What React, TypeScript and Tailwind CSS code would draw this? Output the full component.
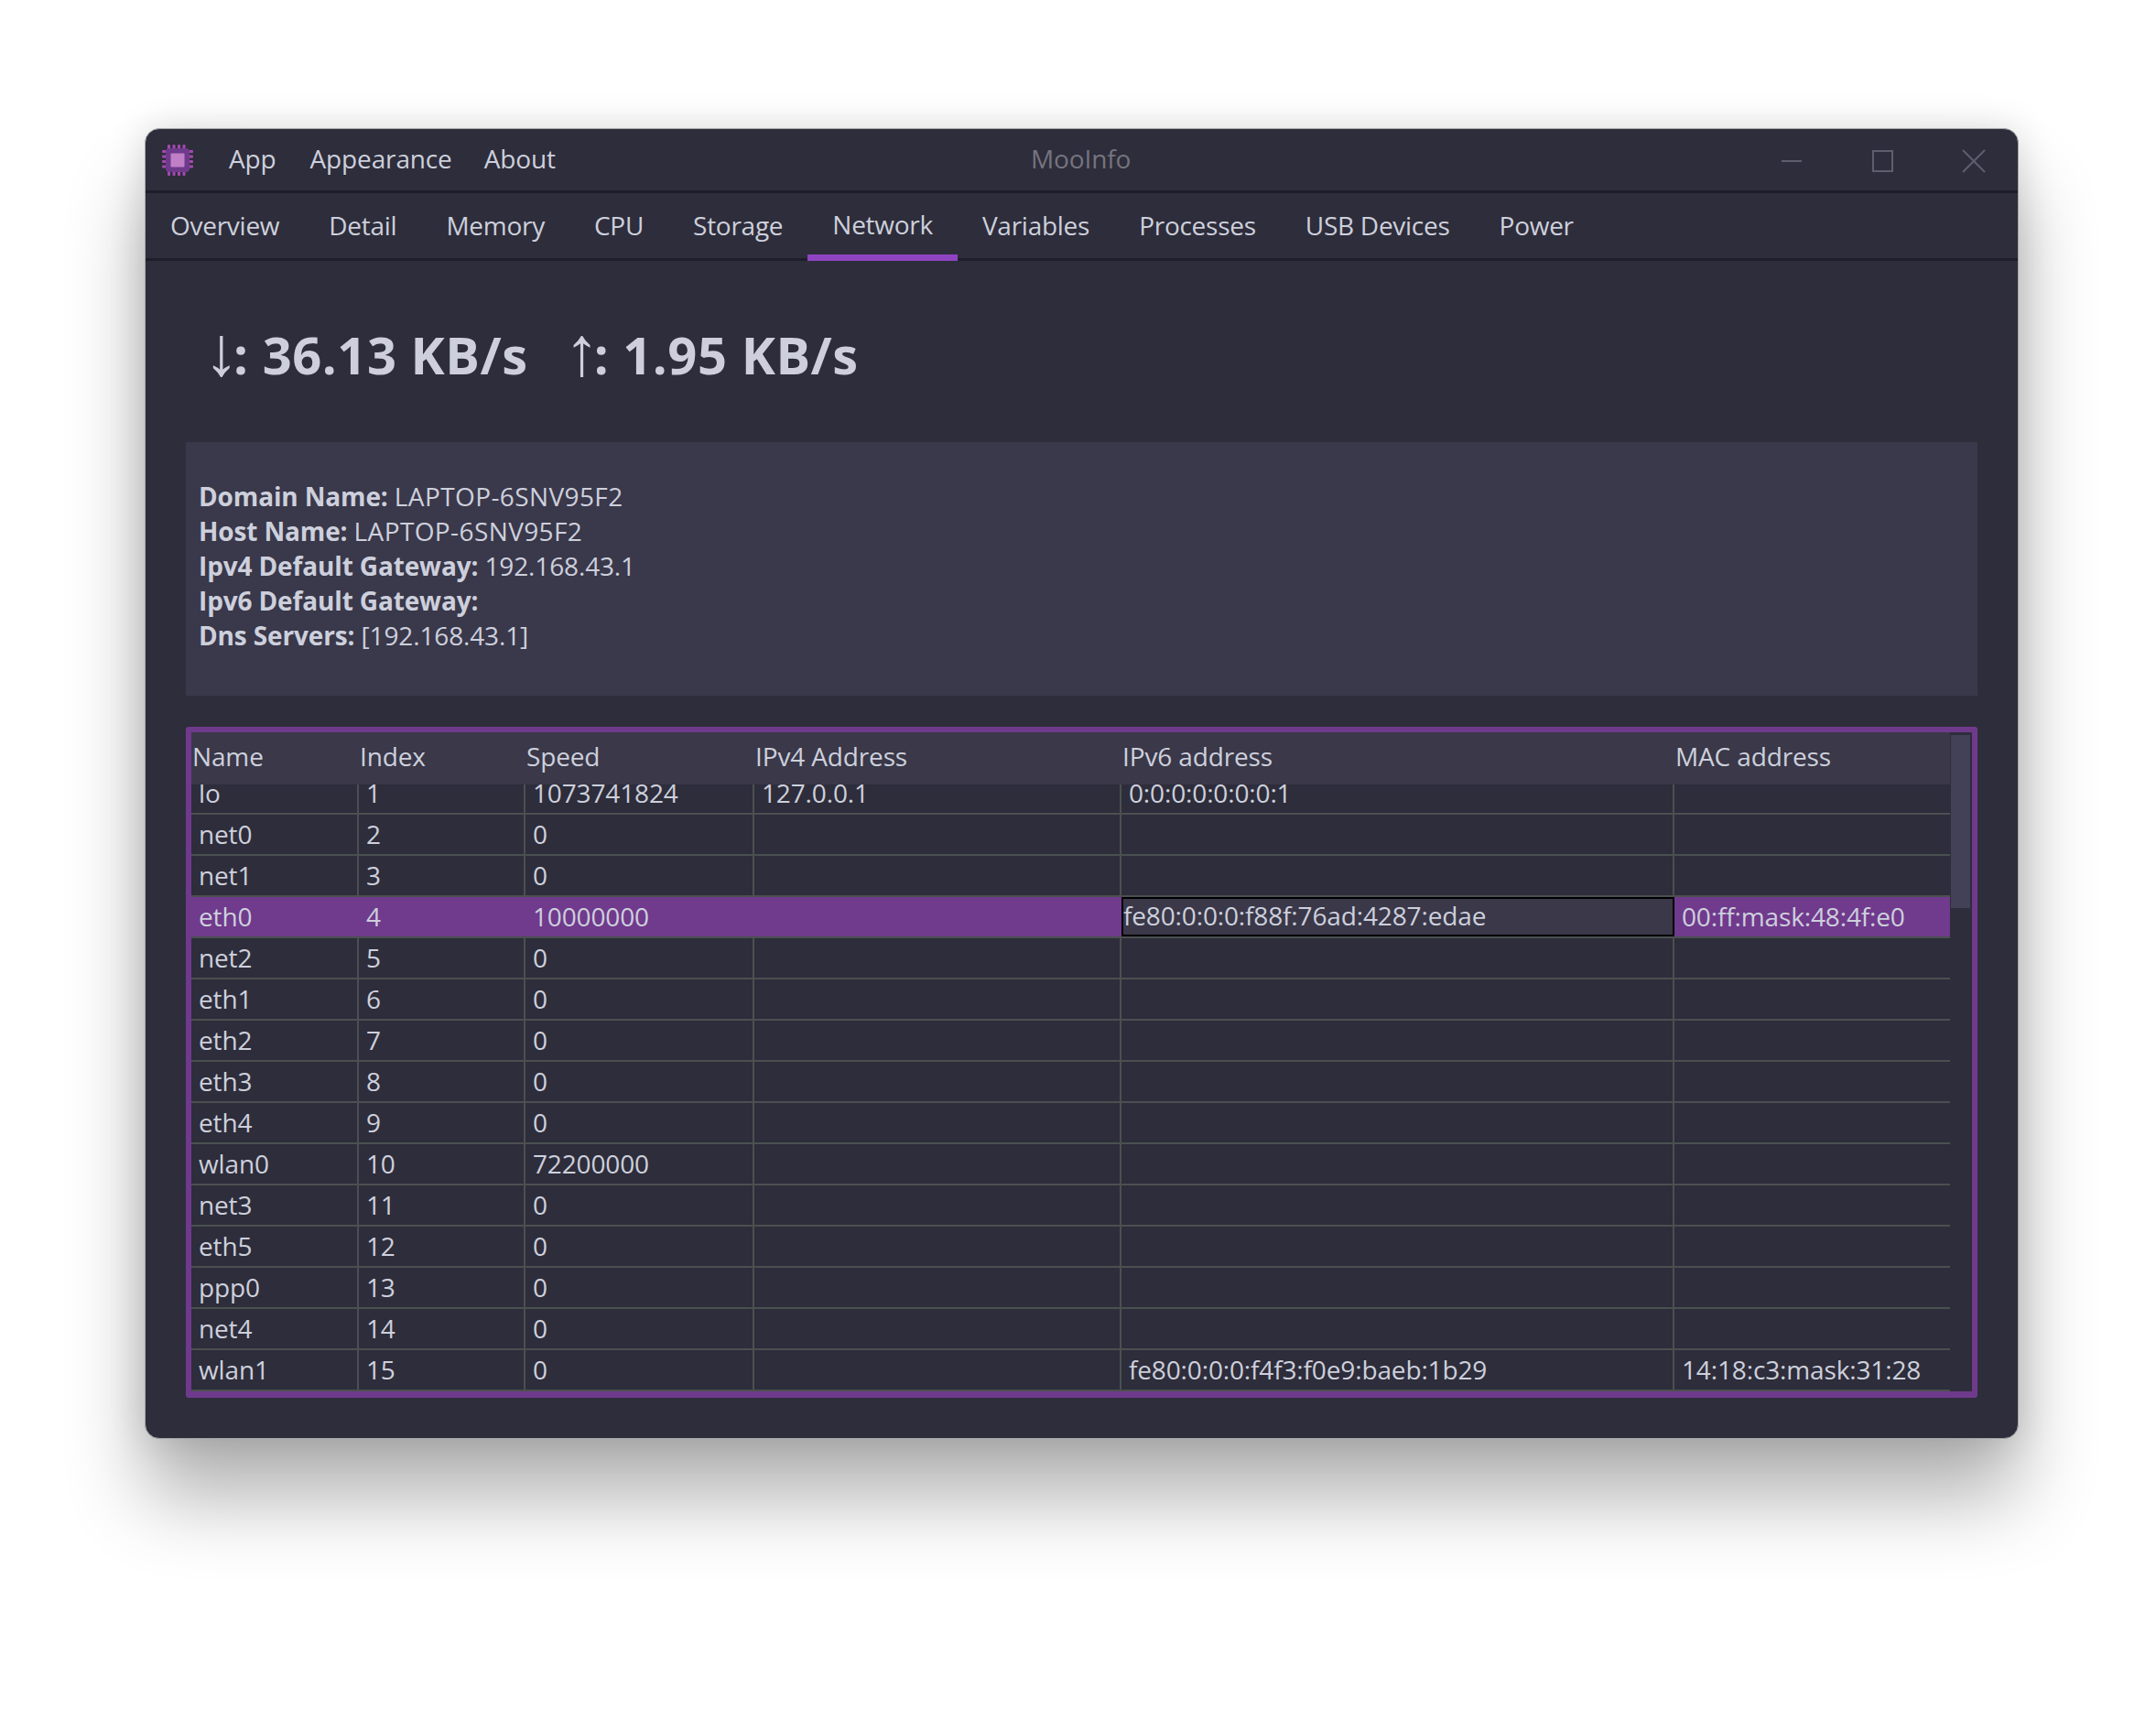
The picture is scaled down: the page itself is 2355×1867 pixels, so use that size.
const font = { fontFamily: '"Open Sans", "Noto Sans", sans-serif' };

const tabs = ['Overview', 'Detail', 'Memory', 'CPU', 'Storage', 'Network', 'Variables', 'Processes', 'USB Devices', 'Power'];
const cols = ['Name', 'Index', 'Speed', 'IPv4 Address', 'IPv6 address', 'MAC address'];
const rows: string[][] = [
  ['lo', '1', '1073741824', '127.0.0.1', '0:0:0:0:0:0:0:1', ''],
  ['net0', '2', '0', '', '', ''],
  ['net1', '3', '0', '', '', ''],
  ['eth0', '4', '10000000', '', 'fe80:0:0:0:f88f:76ad:4287:edae', '00:ff:mask:48:4f:e0'],
  ['net2', '5', '0', '', '', ''],
  ['eth1', '6', '0', '', '', ''],
  ['eth2', '7', '0', '', '', ''],
  ['eth3', '8', '0', '', '', ''],
  ['eth4', '9', '0', '', '', ''],
  ['wlan0', '10', '72200000', '', '', ''],
  ['net3', '11', '0', '', '', ''],
  ['eth5', '12', '0', '', '', ''],
  ['ppp0', '13', '0', '', '', ''],
  ['net4', '14', '0', '', '', ''],
  ['wlan1', '15', '0', '', 'fe80:0:0:0:f4f3:f0e9:baeb:1b29', '14:18:c3:mask:31:28'],
];
const info: [string, string, boolean][] = [
  ['Domain Name:', 'LAPTOP-6SNV95F2', true],
  ['Host Name:', 'LAPTOP-6SNV95F2', true],
  ['Ipv4 Default Gateway:', '192.168.43.1', false],
  ['Ipv6 Default Gateway:', '', false],
  ['Dns Servers:', '[192.168.43.1]', false],
];

function Chip() {
  const offs = [6, 11.5, 17, 22.5];
  return (
    <svg width="36" height="36" viewBox="0 0 36 36">
      {offs.map((o) => (
        <g key={o} fill="#a349b0">
          <rect x={o + 1} y="1" width="3" height="6" rx="1" />
          <rect x={o + 1} y="29" width="3" height="6" rx="1" />
          <rect x="1" y={o + 1} width="6" height="3" rx="1" />
          <rect x="29" y={o + 1} width="6" height="3" rx="1" />
        </g>
      ))}
      <rect x="5" y="5" width="26" height="26" rx="4" fill="#6f3a8c" />
      <rect x="10.5" y="10.5" width="15" height="15" rx="1" fill="#c27fc8" />
    </svg>
  );
}

export default function App() {
  return (
    <div className="min-h-[1867px] overflow-hidden bg-white pl-[158px] pt-[140px]" style={font}>
      <div className="flex h-[1432px] w-[2047px] flex-col rounded-[16px] border border-[#a8a8ac] bg-[#2e2d3b] text-[28px] tracking-[-0.005em] text-[#cdd0dc] shadow-[0_65px_85px_rgba(0,0,0,0.3),0_0_40px_rgba(0,0,0,0.14)]">
        {/* title bar */}
        <div className="relative flex h-[70px] shrink-0 items-center border-b-[3px] border-[#1f1d2a]">
          <div className="ml-[17px] flex h-[36px] w-[36px] items-center justify-center"><Chip /></div>
          <span className="ml-[38px] -translate-y-[2px]">App</span>
          <span className="ml-[37px] -translate-y-[2px]">Appearance</span>
          <span className="ml-[35px] -translate-y-[2px]">About</span>
          <span className="absolute left-[967px] top-[11px] text-[#75747f]">MooInfo</span>
          <svg className="absolute left-[1785px] top-[20px]" width="240" height="30" viewBox="0 0 240 30" fill="none" stroke="#5f5e6e" strokeWidth="2">
            <line x1="2" y1="15" x2="24" y2="15" />
            <rect x="102" y="4" width="21" height="22" />
            <path d="M200 3 L224 27 M224 3 L200 27" />
          </svg>
        </div>
        {/* tabs */}
        <div className="flex h-[74px] shrink-0 border-b-[3px] border-[#1f1d2a] tracking-[-0.0095em]">
          {tabs.map((t) => (
            <div key={t} className={`relative flex h-[74px] items-center px-[27px] pb-[4px] ${t === 'Network' ? 'border-b-[7px] border-[#8e44c0]' : ''}`}>
              {t === 'Network' ? <span className="translate-y-[2px]">{t}</span> : t}
            </div>
          ))}
        </div>
        {/* body */}
        <div className="flex flex-1 flex-col px-[44px]">
          <div className="flex h-[198px] items-center gap-[46px] pl-[26px] pt-[6px] text-[56px] font-bold tracking-[0.01em]">
            <span><span className="ml-[-6px] inline-block translate-y-[1px] font-['Liberation_Sans'] text-[76px] font-normal leading-[0] tracking-[-6px]">↓</span>: 36.13 KB/s</span>
            <span><span className="ml-[-6px] inline-block translate-y-[1px] font-['Liberation_Sans'] text-[76px] font-normal leading-[0] tracking-[-6px]">↑</span>: 1.95 KB/s</span>
          </div>
          <div className="flex h-[277px] flex-col justify-center bg-[#3a384b] pb-[7px] pl-[14px] leading-[38px]">
            {info.map(([k, v, wide]) => (
              <div key={k}>
                <span className="font-bold">{k}</span> <span className={wide ? 'tracking-[0.014em]' : ''}>{v}</span>
              </div>
            ))}
          </div>
          <div className="mt-[34px] flex h-[733px] flex-col overflow-hidden rounded-[3px] border-[6px] border-b-[7px] border-[#6f3a8c]">
            <div className="relative h-full">
              <div className="relative z-10 grid h-[57px] w-[1921px] grid-cols-[183px_182px_250px_401px_604px_301px] items-center bg-[#3a3849] pb-[5px]">
                {cols.map((c) => (
                  <div key={c} className="pl-[1px]">{c}</div>
                ))}
              </div>
              <div className="h-[663px] w-[1921px] overflow-hidden">
                <div className="-mt-[12px]">
                  {rows.map((r) => {
                    const sel = r[0] === 'eth0';
                    return (
                      <div key={r[0]} className={`grid h-[45px] grid-cols-[183px_182px_250px_401px_604px_301px] border-b-2 border-[#4a5050] ${sel ? 'bg-[#703a8d]' : ''}`}>
                        {r.map((v, i) => {
                          const focus = sel && i === 4;
                          const hideLine = sel && i < 5;
                          return (
                            <div
                              key={i}
                              className={`flex items-center overflow-hidden whitespace-nowrap ${focus ? 'border-2 border-[#000000] bg-[#3a3849] pb-[4px]' : 'pb-[2px] pl-[8px]'} ${i < 5 && !hideLine ? 'border-r-2 border-[#4a5050]' : ''}`}
                            >
                              {v}
                            </div>
                          );
                        })}
                      </div>
                    );
                  })}
                </div>
              </div>
              <div className="absolute right-0 top-0 h-full w-[24px] bg-[#2e2d3b]">
                <div className="ml-[1px] mt-[3px] h-[189px] w-[21px] bg-[#424158]" />
              </div>
            </div>
          </div>
        </div>
      </div>
    </div>
  );
}
